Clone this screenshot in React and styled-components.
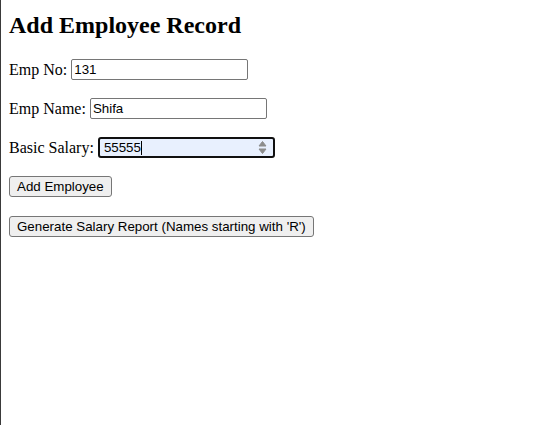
import React from "react";
import styled, { createGlobalStyle } from "styled-components";

const Global = createGlobalStyle`
  html {
    margin: 0;
    border-left: 1px solid #3a3a3a;
    min-height: 100%;
    background: #ffffff;
  }
  body {
    margin: 0;
    padding: 12px 8px 8px 8px;
    font-family: "Liberation Serif", "Times New Roman", serif;
    font-size: 16px;
    color: #000;
  }
`;

const Heading = styled.h2`
  margin: 0 0 20px 0;
  font-family: "Liberation Serif", "Times New Roman", serif;
  font-size: 24px;
  font-weight: bold;
  line-height: normal;
`;

const Form = styled.form`
  display: flex;
  flex-direction: column;
  align-items: flex-start;
  gap: 18px;
`;

const Row = styled.div`
  display: flex;
  align-items: center;
  gap: 4px;
  height: 21px;
  margin-top: ${(p) => p.$shift || 0}px;
`;

const Label = styled.label`
  font-family: "Liberation Serif", "Times New Roman", serif;
  font-size: 16px;
  white-space: nowrap;
`;

const TextInput = styled.input`
  box-sizing: border-box;
  width: 177px;
  height: 21px;
  margin: 0;
  padding: 1px 2px;
  border: 1px solid #767676;
  border-radius: 2px;
  background: #ffffff;
  color: #000;
  font-family: "Liberation Sans", Arial, sans-serif;
  font-size: 13.333px;
  outline: none;
`;

const FocusedField = styled.div`
  box-sizing: border-box;
  width: 177px;
  height: 21px;
  display: flex;
  align-items: center;
  padding: 0 6px 0 4px;
  border: 2px solid #101010;
  border-radius: 3px;
  background: #e8f0fe;
  font-family: "Liberation Sans", Arial, sans-serif;
  font-size: 13.333px;
  color: #000;
`;

const FieldValue = styled.span`
  line-height: 15px;
`;

const Caret = styled.span`
  display: inline-block;
  width: 1px;
  height: 14px;
  background: #000;
`;

const Spinner = styled.svg`
  margin-left: auto;
  display: block;
`;

const Button = styled.button`
  box-sizing: border-box;
  height: 21px;
  margin: 0;
  padding: 1px 7px;
  border: 1px solid #767676;
  border-radius: 3px;
  background: #efefef;
  color: #000;
  font-family: "Liberation Sans", Arial, sans-serif;
  font-size: 13.333px;
  line-height: normal;
  cursor: default;
`;

export default function App() {
  return (
    <>
      <Global />
      <Heading>Add Employee Record</Heading>
      <Form onSubmit={(e) => e.preventDefault()}>
        <Row>
          <Label htmlFor="empno">Emp No:</Label>
          <TextInput id="empno" type="text" defaultValue="131" />
        </Row>
        <Row>
          <Label htmlFor="empname">Emp Name:</Label>
          <TextInput id="empname" type="text" defaultValue="Shifa" />
        </Row>
        <Row>
          <Label>Basic Salary:</Label>
          <FocusedField>
            <FieldValue>55555</FieldValue>
            <Caret />
            <Spinner width="9" height="15" viewBox="0 0 9 15">
              <path d="M4.5 1.5 L8 6 L1 6 Z" fill="#8c8c8c" stroke="#8c8c8c" strokeLinejoin="round" />
              <path d="M4.5 13.5 L8 9 L1 9 Z" fill="#8c8c8c" stroke="#8c8c8c" strokeLinejoin="round" />
            </Spinner>
          </FocusedField>
        </Row>
        <Row>
          <Button type="button">Add Employee</Button>
        </Row>
        <Row $shift={1}>
          <Button type="button">Generate Salary Report (Names starting with 'R')</Button>
        </Row>
      </Form>
    </>
  );
}
